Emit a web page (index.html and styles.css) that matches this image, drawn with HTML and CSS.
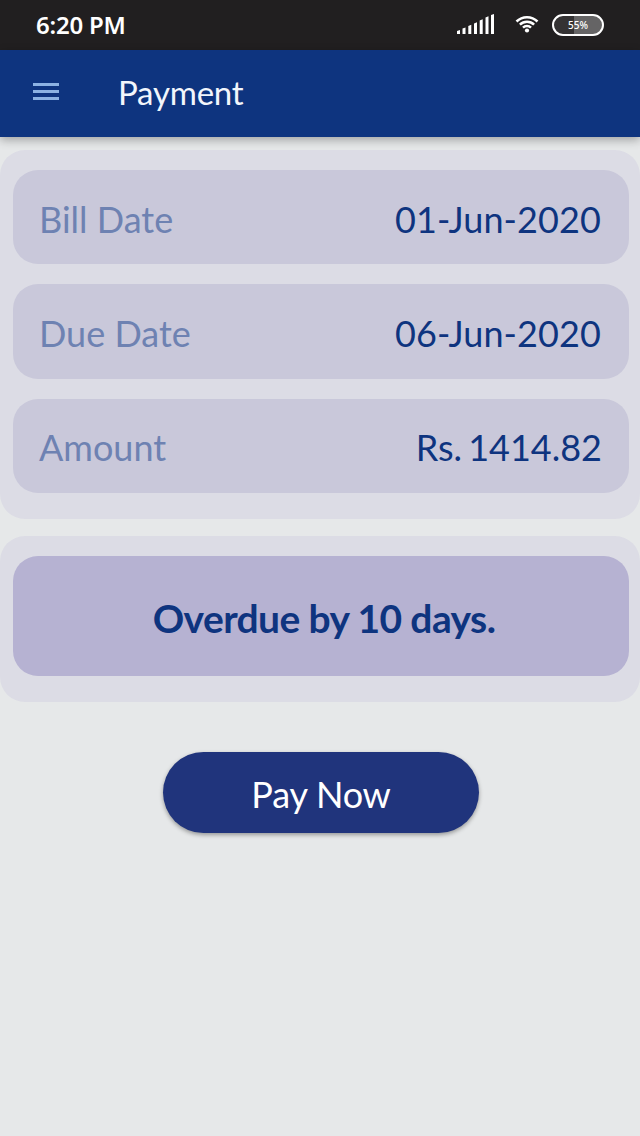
FILE: index.html
```html
<!DOCTYPE html>
<html lang="en">
<head>
    <meta charset="UTF-8">
    <meta name="viewport" content="width=device-width, initial-scale=1.0">
    <title>Payment</title>
    <link rel="stylesheet" href="styles.css">
</head>
<body>
    <div class="status-bar">
        <span class="status-time">6:20 PM</span>
        <div class="status-icons">
            <svg class="signal-icon" width="38" height="20" viewBox="0 0 38 20" fill="#ffffff">
                <path d="M0 17l3-1v4H0zM5.500 14.500l3-1V20h-3zM11.300 12l3-1.200V20h-3zM17 9.500l3-1.200V20h-3zM22.700 6.500l3-1.200V20h-3zM28.500 3.500l3-1.200V20h-3zM34 1L37 0v20h-3z"/>
            </svg>
            <svg class="wifi-icon" width="24" height="18" viewBox="0 0 24 18" fill="none" stroke="#ffffff" stroke-width="2.500">
                <path d="M1.500 6.500a14.800 14.800 0 0 1 21 0M4.900 9.700a10.200 10.200 0 0 1 14.200 0M8 12.700a5.700 5.700 0 0 1 8 0"/>
                <circle cx="12" cy="15.500" r="2.100" fill="#ffffff" stroke="none"/>
            </svg>
            <span class="battery">55%</span>
        </div>
    </div>

    <header class="app-header">
        <button class="menu-button" aria-label="Menu">
            <span class="menu-line"></span>
            <span class="menu-line"></span>
            <span class="menu-line"></span>
        </button>
        <h1 class="app-title">Payment</h1>
    </header>

    <main class="content">
        <section class="panel">
            <div class="bill-row">
                <span class="bill-label">Bill Date</span>
                <span class="bill-value">01-Jun-2020</span>
            </div>
            <div class="bill-row">
                <span class="bill-label">Due Date</span>
                <span class="bill-value">06-Jun-2020</span>
            </div>
            <div class="bill-row">
                <span class="bill-label">Amount</span>
                <span class="bill-value bill-amount">Rs. 1414.82</span>
            </div>
        </section>

        <section class="panel">
            <div class="overdue">Overdue by 10 days.</div>
        </section>

        <button class="pay-button">Pay Now</button>
    </main>
</body>
</html>
```
FILE: styles.css
```css
:root {
    --primary-color: #0e347f;
    --button-color: #20347c;
    --background-color: #e6e8e9;
    --panel-bg: #dcdce5;
    --row-bg: #c9c8da;
    --overdue-bg: #b6b2d2;
    --label-color: #6e82b2;
}

* {
    box-sizing: border-box;
}

body {
    margin: 0;
    min-height: 100vh;
    background-color: var(--background-color);
    font-family: Lato, sans-serif;
}

/* Status bar */
.status-bar {
    display: flex;
    justify-content: space-between;
    align-items: center;
    height: 50px;
    padding: 0 36px;
    background-color: #211f20;
    color: #ffffff;
}

.status-time {
    padding-bottom: 2px;
    font-family: "Noto Sans", sans-serif;
    font-size: 24px;
    font-weight: 600;
    letter-spacing: -0.2px;
}

.status-icons {
    display: flex;
    align-items: center;
}

.signal-icon {
    margin: 0 20px 2px 0;
}

.wifi-icon {
    margin: 0 13px 2px 0;
}

.battery {
    width: 52px;
    height: 22px;
    border: 2px solid #ffffff;
    border-radius: 11px;
    background: linear-gradient(to right, #343233 42%, #656465 42%);
    font-family: "Noto Sans", sans-serif;
    font-size: 10px;
    font-weight: 500;
    line-height: 18px;
    text-align: center;
}

/* Header */
.app-header {
    position: relative;
    display: flex;
    align-items: center;
    height: 87px;
    padding-left: 33px;
    background-color: var(--primary-color);
    box-shadow: 0 3px 9px rgba(0, 0, 0, 0.3);
}

.menu-button {
    display: flex;
    flex-direction: column;
    gap: 4px;
    width: 26px;
    margin: 0 59px 4px 0;
    padding: 0;
    border: none;
    background: none;
}

.menu-line {
    height: 3px;
    background-color: #8cb2e3;
}

.app-title {
    margin: 0 0 4px;
    color: #f2f6fc;
    font-size: 33px;
    font-weight: 400;
    letter-spacing: -0.2px;
}

/* Content */
.content {
    display: flex;
    flex-direction: column;
    align-items: center;
    padding-top: 13px;
}

.panel {
    display: flex;
    flex-direction: column;
    gap: 20px;
    width: 100%;
    margin-bottom: 17px;
    padding: 20px 11px 26px 13px;
    border-radius: 25px;
    background-color: var(--panel-bg);
}

.bill-row {
    display: flex;
    justify-content: space-between;
    align-items: center;
    height: 94.300px;
    padding: 3px 27px 0 26px;
    border-radius: 25px;
    background-color: var(--row-bg);
    font-size: 36px;
}

.bill-label {
    color: var(--label-color);
}

.bill-value {
    margin-right: 1px;
    color: var(--primary-color);
    letter-spacing: 0.1px;
}

.bill-amount {
    margin-right: 0;
    letter-spacing: 0;
    word-spacing: -3px;
}

.overdue {
    height: 120.500px;
    padding-left: 6px;
    border-radius: 25px;
    background-color: var(--overdue-bg);
    color: var(--primary-color);
    font-size: 39px;
    font-weight: 700;
    letter-spacing: -0.6px;
    line-height: 124px;
    text-align: center;
}

.pay-button {
    width: 316px;
    height: 81px;
    margin: 33px 0 0 2px;
    padding: 3px 0 0;
    border: none;
    border-radius: 41px;
    background-color: var(--button-color);
    box-shadow: 0 2px 4px rgba(0, 0, 0, 0.35);
    color: #ffffff;
    font-family: inherit;
    font-size: 36px;
    letter-spacing: -0.2px;
}
```
